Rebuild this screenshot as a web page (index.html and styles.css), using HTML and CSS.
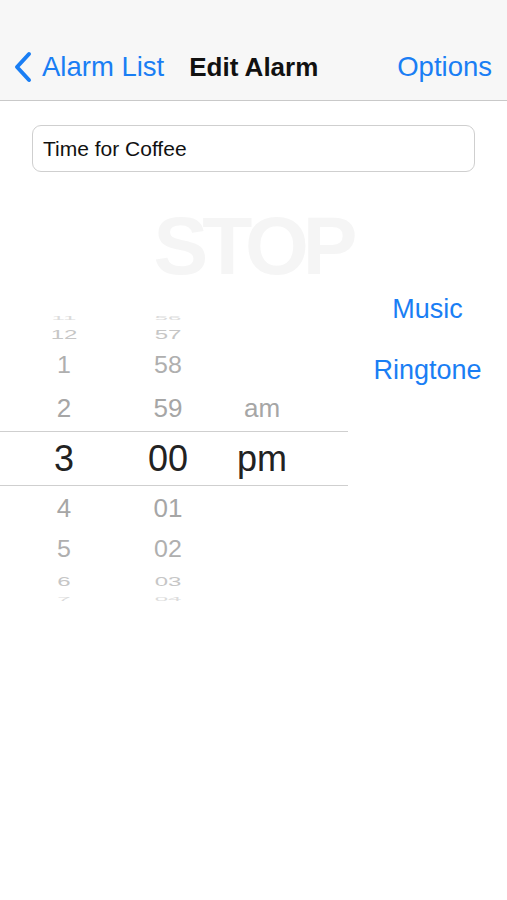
FILE: index.html
```html
<!DOCTYPE html>
<html>
<head>
<meta charset="utf-8">
<link rel="stylesheet" href="styles.css">
</head>
<body>
<header class="nav">
  <div class="nav-back">
    <svg class="chev" width="22" height="32" viewBox="0 0 22 32"><path d="M17 3 L5 16 L17 29" fill="none" stroke="#1a7ef4" stroke-width="4" stroke-linecap="round" stroke-linejoin="round"/></svg>
    <span>Alarm List</span>
  </div>
  <div class="nav-title">Edit Alarm</div>
  <div class="nav-right">Options</div>
</header>
<main class="content">
  <div class="field">Time for Coffee</div>
  <div class="stop">STOP</div>
  <div class="lower">
    <div class="picker">
      <div class="row r-edge1 top"><span class="c1">11</span><span class="c2">56</span><span class="c3"></span></div>
      <div class="row r-edge2"><span class="c1">12</span><span class="c2">57</span><span class="c3"></span></div>
      <div class="row r-near1"><span class="c1">1</span><span class="c2">58</span><span class="c3"></span></div>
      <div class="row r-near2"><span class="c1">2</span><span class="c2">59</span><span class="c3">am</span></div>
      <div class="row r-sel"><span class="c1">3</span><span class="c2">00</span><span class="c3">pm</span></div>
      <div class="row r-near2 b"><span class="c1">4</span><span class="c2">01</span><span class="c3"></span></div>
      <div class="row r-near1 b"><span class="c1">5</span><span class="c2">02</span><span class="c3"></span></div>
      <div class="row r-edge2 b"><span class="c1">6</span><span class="c2">03</span><span class="c3"></span></div>
      <div class="row r-edge1 bot"><span class="c1">7</span><span class="c2">04</span><span class="c3"></span></div>
    </div>
    <div class="side">
      <div class="link music">Music</div>
      <div class="link ringtone">Ringtone</div>
    </div>
  </div>
</main>
</body>
</html>
```

FILE: styles.css
```css
html, body {
  margin: 0;
  padding: 0;
  background: #ffffff;
  font-family: "Liberation Sans", Arial, sans-serif;
}
.nav {
  height: 101px;
  background: #f7f7f7;
  border-bottom: 1px solid #c9c9c9;
  box-sizing: border-box;
  display: flex;
  align-items: center;
  padding: 34px 15px 0 12px;
  font-size: 27.5px;
}
.nav-back {
  display: flex;
  align-items: center;
  color: #1a7ef4;
  gap: 8px;
}
.nav-title {
  font-weight: bold;
  font-size: 26px;
  color: #111;
  margin-left: 25px;
}
.nav-right {
  margin-left: auto;
  color: #1a7ef4;
}
.content {
  display: flex;
  flex-direction: column;
}
.field {
  margin: 24px 32px 0 32px;
  height: 47px;
  box-sizing: border-box;
  border: 1px solid #cfcfcf;
  border-radius: 9px;
  font-size: 21px;
  color: #111;
  padding-left: 10px;
  display: flex;
  align-items: center;
}
.stop {
  margin-top: 26px;
  height: 96px;
  text-align: center;
  font-weight: bold;
  font-size: 82px;
  line-height: 96px;
  color: #f5f5f5;
  letter-spacing: -6px;
  padding-right: 2px;
}
.lower {
  display: flex;
  margin-top: -4px;
}
.picker {
  width: 348px;
  display: flex;
  flex-direction: column;
  padding-top: 22px;
}
.row {
  display: flex;
  align-items: center;
  overflow: hidden;
}
.row span {
  display: block;
  text-align: center;
}
.c1 { width: 128px; }
.c2 { width: 80px; }
.c3 { width: 108px; }
.r-edge1 { height: 12px; font-size: 24px; color: #dcdcdc; }
.r-edge1 span { transform: scaleY(0.22); }
.r-edge2 { height: 21px; font-size: 24px; color: #c6c6c6; }
.r-edge2 span { transform: scaleY(0.52); }
.r-near1 { height: 41px; font-size: 25px; color: #afafaf; }
.r-near1 span { transform: scaleY(0.92); }
.r-near2 { height: 45px; font-size: 26px; color: #a6a6a6; }
.r-sel {
  height: 55px;
  font-size: 36px;
  color: #222;
  border-top: 1px solid #cfcfcf;
  border-bottom: 1px solid #cfcfcf;
  box-sizing: border-box;
}
.r-near2.b { height: 43px; }
.r-near2.b span { padding-top: 2px; }
.r-near1.b { height: 40px; }
.r-edge2.b { height: 25px; }
.r-edge2.b span { transform: scaleY(0.55); }
.bot { height: 10px; }
.bot span { transform: scaleY(0.2); }
.side {
  flex: 1;
  display: flex;
  flex-direction: column;
  align-items: center;
  font-size: 27px;
  color: #1a7ef4;
  padding-top: 4px;
}
.link {
  height: 30px;
  line-height: 30px;
}
.ringtone {
  margin-top: 31px;
}
```
